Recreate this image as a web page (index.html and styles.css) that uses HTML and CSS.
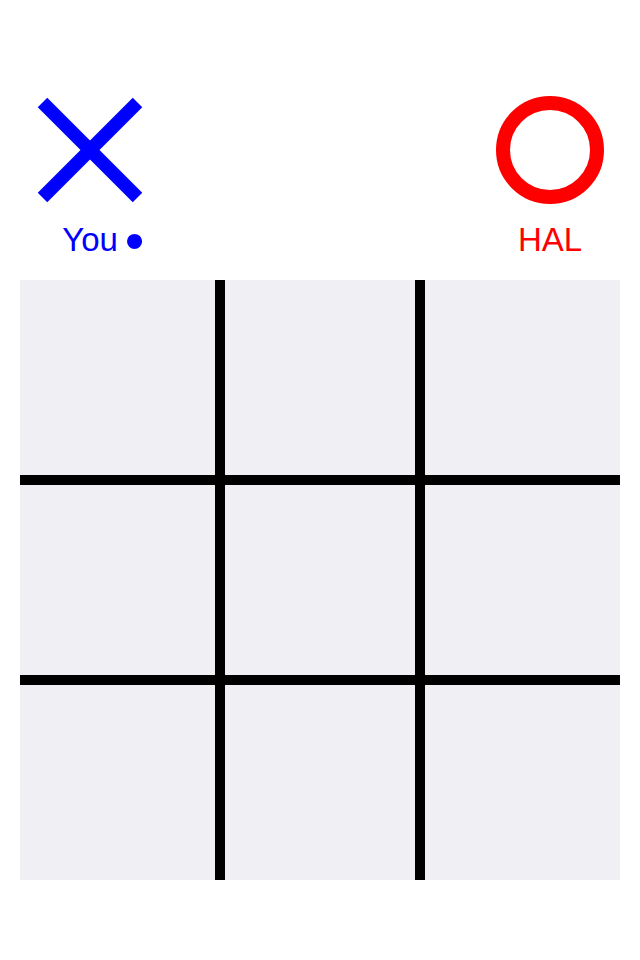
FILE: index.html
```html
<!DOCTYPE html>
<html lang="en">
<head>
<meta charset="utf-8">
<title>Tic Tac Toe</title>
<link rel="stylesheet" href="styles.css">
</head>
<body>
<div class="app">
  <header class="players">
    <div class="player player-x">
      <svg class="mark" width="140" height="120" viewBox="0 0 140 120" aria-hidden="true">
        <line x1="22.5" y1="12.5" x2="117.5" y2="107.5" stroke="#0000ff" stroke-width="13.5"/>
        <line x1="117.5" y1="12.5" x2="22.5" y2="107.5" stroke="#0000ff" stroke-width="13.5"/>
      </svg>
      <div class="label"><span class="name">You<span class="dot">•</span></span></div>
    </div>
    <div class="player player-o">
      <svg class="mark" width="140" height="120" viewBox="0 0 140 120" aria-hidden="true">
        <circle cx="70" cy="60" r="47" fill="none" stroke="#ff0000" stroke-width="14"/>
      </svg>
      <div class="label"><span class="name">HAL</span></div>
    </div>
  </header>
  <main class="board">
    <div class="cell"></div>
    <div class="cell"></div>
    <div class="cell"></div>
    <div class="cell"></div>
    <div class="cell"></div>
    <div class="cell"></div>
    <div class="cell"></div>
    <div class="cell"></div>
    <div class="cell"></div>
  </main>
</div>
</body>
</html>
```

FILE: styles.css
```css
html, body {
  margin: 0;
  padding: 0;
  background: #ffffff;
}

body {
  font-family: "Liberation Sans", Arial, sans-serif;
}

.app {
  width: 640px;
  height: 960px;
  padding: 0 20px;
  box-sizing: border-box;
}

.players {
  display: flex;
  justify-content: space-between;
  padding-top: 90px;
}

.player {
  width: 140px;
  display: flex;
  flex-direction: column;
  align-items: center;
}

.mark {
  display: block;
}

.label {
  margin-top: 12px;
  font-size: 33px;
  line-height: 36px;
  height: 36px;
}

.name {
  position: relative;
  display: inline-block;
}

.player-x .label {
  color: #0000ff;
}

.player-o .label {
  color: #ff0000;
}

.dot {
  position: absolute;
  left: calc(100% + 7px);
  top: -10px;
  font-size: 56px;
  line-height: 58px;
}

.board {
  margin-top: 22px;
  display: grid;
  grid-template-columns: 195px 190px 195px;
  grid-template-rows: 195px 190px 195px;
  gap: 10px;
  background: #000000;
  width: 600px;
  height: 600px;
}

.cell {
  background: #efeff4;
}
```
